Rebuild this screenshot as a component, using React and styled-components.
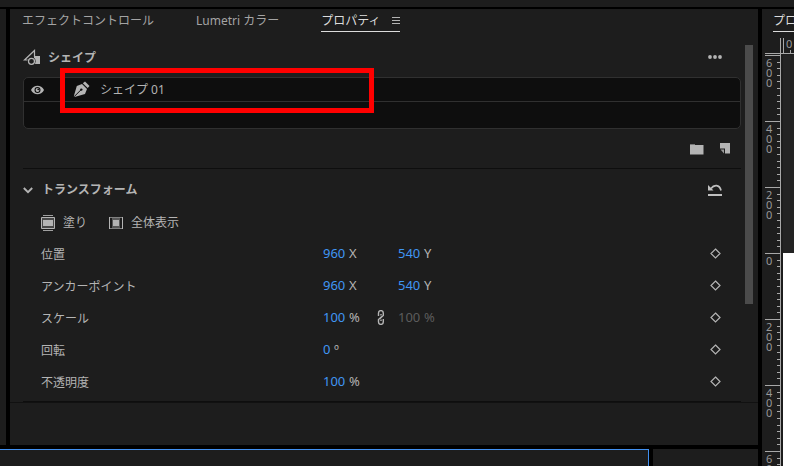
import React from "react"
import styled, { createGlobalStyle } from "styled-components"

const rows = [
  { id: "position", label: "位置", first: ["960", "X"], second: ["540", "Y"] },
  {
    id: "anchor",
    label: "アンカーポイント",
    first: ["960", "X"],
    second: ["540", "Y"],
  },
  {
    id: "scale",
    label: "スケール",
    first: ["100", "%"],
    second: ["100", "%"],
    linked: true,
  },
  { id: "rotation", label: "回転", first: ["0", "º"] },
  { id: "opacity", label: "不透明度", first: ["100", "%"] },
]

const rulerMarks = ["600", "400", "200", "0", "200", "400", "600"]
const minorTicks = [7, 13, 20, 26, 33, 40, 46, 53, 59]

function App() {
  return (
    <>
      <GlobalStyle />
      <Frame>
        <TopStrip />
        <Workspace>
          <LeftArea>
            <UpperRow>
              <SidePanel />
              <PropertiesPanel />
            </UpperRow>
            <LowerRow>
              <TimelinePanel />
              <MeterPanel />
            </LowerRow>
          </LeftArea>
          <ProgramPanel />
        </Workspace>
      </Frame>
    </>
  )
}

export default App

function PropertiesPanel() {
  return (
    <Panel>
      <Tabs>
        <Tab>エフェクトコントロール</Tab>
        <Tab>Lumetri カラー</Tab>
        <Tab $active>
          プロパティ
          <MenuIcon />
        </Tab>
      </Tabs>
      <Body>
        <Content>
          <Header>
            <ShapeIcon />
            <Title>シェイプ</Title>
            <IconButton aria-label="その他">
              <MoreIcon />
            </IconButton>
          </Header>
          <LayerList>
            <Layer>
              <VisibilityButton aria-label="表示">
                <EyeIcon />
              </VisibilityButton>
              <PenIcon />
              <span>シェイプ 01</span>
            </Layer>
            <Highlight />
          </LayerList>
          <Actions>
            <IconButton aria-label="グループ">
              <FolderIcon />
            </IconButton>
            <IconButton aria-label="新規レイヤー">
              <NewIcon />
            </IconButton>
          </Actions>
          <Section>
            <SectionHeader>
              <SectionToggle>
                <ChevronIcon />
                トランスフォーム
              </SectionToggle>
              <IconButton aria-label="リセット">
                <ResetIcon />
              </IconButton>
            </SectionHeader>
            <FitRow>
              <FitButton>
                <FillIcon />
                塗り
              </FitButton>
              <FitButton>
                <FitIcon />
                全体表示
              </FitButton>
            </FitRow>
            {rows.map(row => (
              <Row key={row.id}>
                <Label htmlFor={row.id}>{row.label}</Label>
                <Value id={row.id} data={row.first} />
                <Link>{row.linked && <LinkIcon />}</Link>
                {row.second ? (
                  <Value
                    id={row.id + "-2"}
                    name={row.label + " " + row.second[1]}
                    data={row.second}
                    disabled={row.linked}
                  />
                ) : (
                  <span />
                )}
                <IconButton aria-label="キーフレーム">
                  <KeyframeIcon />
                </IconButton>
              </Row>
            ))}
          </Section>
        </Content>
        <Scrollbar>
          <Thumb />
        </Scrollbar>
      </Body>
    </Panel>
  )
}

function Value({ id, name, data, disabled }) {
  return (
    <ValueBox $dim={disabled}>
      <ValueInput
        id={id}
        aria-label={name}
        defaultValue={data[0]}
        disabled={disabled}
        $short={data[0].length === 1}
      />
      <span>{data[1]}</span>
    </ValueBox>
  )
}

function ProgramPanel() {
  return (
    <Program>
      <ProgramTab>プログラム</ProgramTab>
      <TopRuler>
        <svg width="29" height="18" shapeRendering="crispEdges">
          <path
            d="M15.5 0v18M18.5 0v15M0 15.5h29M0 17.5h15M25.5 12v3"
            stroke="#a8a8a8"
          />
        </svg>
        <TopMark>0</TopMark>
      </TopRuler>
      <Stage>
        <SideRuler>
          {rulerMarks.map((mark, i) => (
            <RulerSegment key={i}>
              <RulerMark>
                {mark.split("").map((digit, j) => (
                  <span key={j}>{digit}</span>
                ))}
              </RulerMark>
              <svg width="16" height="66" shapeRendering="crispEdges">
                <path
                  d={
                    "M15.5 0v66" +
                    (i > 0 ? "M0 .5h15" : "") +
                    minorTicks.map(y => `M12 ${y}.5h3`).join("")
                  }
                  stroke="#a8a8a8"
                />
              </svg>
            </RulerSegment>
          ))}
        </SideRuler>
        <Canvas>
          <Pasteboard />
          <Picture />
        </Canvas>
      </Stage>
    </Program>
  )
}

const MenuIcon = () => (
  <svg width="8" height="8" shapeRendering="crispEdges">
    <path d="M0 .5h8M0 3.5h8M0 6.5h8" stroke="#b4b4b4" />
  </svg>
)

const ShapeIcon = () => (
  <svg width="17" height="16" viewBox="0 0 17 16">
    <path
      d="M5.5 11H1.500L11.500 1.500V8"
      fill="none"
      stroke="#b4b4b4"
      strokeWidth="1.200"
    />
    <path d="M11 7h6v8h-6z" fill="#b4b4b4" />
    <circle cx="8.500" cy="12.300" r="4.100" fill="#1d1d1d" />
    <circle cx="8.500" cy="12.300" r="3" fill="none" stroke="#b4b4b4" strokeWidth="1.300" />
  </svg>
)

const MoreIcon = () => (
  <svg width="14" height="4" viewBox="0 0 14 4" fill="#b4b4b4">
    <circle cx="2" cy="2" r="1.9" />
    <circle cx="7" cy="2" r="1.9" />
    <circle cx="12" cy="2" r="1.9" />
  </svg>
)

const EyeIcon = () => (
  <svg width="13" height="10" viewBox="0 0 13 10">
    <path
      d="M0 5C1.500 2 4 .8 6.500.8S11.500 2 13 5C11.500 8 9 9.200 6.500 9.200S1.500 8 0 5z"
      fill="#b4b4b4"
    />
    <circle cx="6.500" cy="5" r="3" fill="#0e0e0e" />
    <circle cx="6.500" cy="5" r="1.900" fill="#b4b4b4" />
    <circle cx="7.200" cy="4.300" r=".9" fill="#0e0e0e" />
  </svg>
)

const PenIcon = () => (
  <svg width="17" height="17" viewBox="0 0 17 17">
    <path d="M9.800 2.300L12 .5l4.500 4.500-1.800 2z" fill="#b4b4b4" />
    <path d="M9 3l5 5-2 5L1.500 16 .8 15.200 3.800 5z" fill="#b4b4b4" />
    <path d="M1 15.800L7.800 9" stroke="#0e0e0e" strokeWidth="1" />
    <circle cx="8.300" cy="8.600" r="1.200" fill="#0e0e0e" />
  </svg>
)

const FolderIcon = () => (
  <svg width="14" height="12" viewBox="0 0 14 12">
    <path d="M0 2V1h5v1z" fill="#777" />
    <path d="M0 2h13.500v9.500H0z" fill="#b4b4b4" />
  </svg>
)

const NewIcon = () => (
  <svg width="10" height="11" viewBox="0 0 10 11">
    <path d="M0 0h10v10.500H5V5.500H0z" fill="#b4b4b4" />
    <path d="M.5 6.500h3.500v4z" fill="#999" />
  </svg>
)

const ChevronIcon = () => (
  <svg width="10" height="7" viewBox="0 0 10 7">
    <path d="M.8 1L5 5.200 9.200 1" fill="none" stroke="#b4b4b4" strokeWidth="1.900" />
  </svg>
)

const ResetIcon = () => (
  <svg width="14" height="12" viewBox="0 0 14 12">
    <path d="M0 1v5.500h5.500z" fill="#c0c0c0" />
    <path
      d="M3 4.500C6 .5 11.500.2 13 6.500"
      fill="none"
      stroke="#c0c0c0"
      strokeWidth="1.700"
    />
    <path d="M0 10h14v2H0z" fill="#c0c0c0" />
  </svg>
)

const FillIcon = () => (
  <svg width="14" height="16" viewBox="0 0 14 16">
    <path d="M2 .5h10M2 15.500h10" stroke="#a0a0a0" />
    <path d="M.5 2.500h13v11H.5z" fill="#484848" stroke="#b4b4b4" />
    <path d="M2 5h10v6H2z" fill="#b4b4b4" />
  </svg>
)

const FitIcon = () => (
  <svg width="14" height="12" viewBox="0 0 14 12">
    <path d="M0 .5h14M0 11.500h14" stroke="#808080" />
    <path d="M.5 0v12M13.500 0v12" stroke="#b4b4b4" />
    <path d="M3 1h8v10H3z" fill="#585858" />
    <path d="M4 3h6v6H4z" fill="#b4b4b4" />
  </svg>
)

const LinkIcon = () => (
  <svg width="8" height="15" viewBox="0 0 8 15">
    <path
      d="M1.500 6V3a2.300 2.300 0 0 1 4.800 0V5.500L3 8.500M6.300 9v3a2.300 2.300 0 0 1-4.800 0V9.500L4.800 6.500M4 4v1.500M4 9.500v1.500"
      fill="none"
      stroke="#b4b4b4"
      strokeWidth="1.400"
    />
  </svg>
)

const KeyframeIcon = () => (
  <svg width="11" height="11" viewBox="0 0 11 11">
    <path
      d="M5.500 1l4.500 4.500-4.500 4.500L1 5.500z"
      fill="none"
      stroke="#b4b4b4"
      strokeWidth="1.200"
    />
  </svg>
)

const GlobalStyle = createGlobalStyle`
  * {
    box-sizing: border-box;
  }
  body {
    margin: 0;
    background: #000;
    color: #b4b4b4;
    font: 12px/16px "Noto Sans", "Noto Sans CJK JP", sans-serif;
  }
  button,
  input {
    padding: 0;
    border: 0;
    background: none;
    color: inherit;
    font: inherit;
  }
  svg {
    display: block;
    flex: none;
  }
`

const Frame = styled.div`
  display: flex;
  flex-direction: column;
  gap: 2px;
  height: 100vh;
  overflow: hidden;
`
const TopStrip = styled.div`
  flex: none;
  height: 7px;
  background: #1d1d1d;
`
const Workspace = styled.div`
  display: flex;
  flex: 1;
  gap: 4px;
  min-height: 0;
`
const LeftArea = styled.div`
  display: flex;
  flex-direction: column;
  flex: 1;
  gap: 4px;
  min-width: 0;
`
const UpperRow = styled.div`
  display: flex;
  flex: 1;
  gap: 4px;
`
const SidePanel = styled.div`
  width: 6px;
  background: #1d1d1d;
`
const Panel = styled.main`
  flex: 1;
  min-width: 0;
  background: #1d1d1d;
`
const LowerRow = styled.div`
  display: flex;
  gap: 4px;
  height: 17px;
`
const TimelinePanel = styled.div`
  flex: 1;
  border-top: 1px solid #4190f0;
  border-right: 1px solid #4190f0;
  background: #1d1d1d;
`
const MeterPanel = styled.div`
  width: 105px;
  background: #1d1d1d;
`

const Tabs = styled.nav`
  display: flex;
  gap: 42px;
  padding: 4px 12px 0;
`
const Tab = styled.button`
  display: flex;
  align-items: center;
  gap: 11px;
  height: 19px;
  padding-bottom: 2px;
  border-bottom: 1px solid ${props => (props.$active ? "#dcdcdc" : "transparent")};
  color: ${props => (props.$active ? "#dcdcdc" : "#a4a4a4")};
  white-space: nowrap;
`
const Body = styled.div`
  display: flex;
  gap: 4px;
  margin-top: 13px;
  padding-right: 5px;
  border-bottom: 1px solid #111;
`
const Content = styled.div`
  flex: 1;
  min-width: 0;
  padding-left: 13px;
`
const Scrollbar = styled.div`
  width: 8px;
`
const Thumb = styled.div`
  height: 259px;
  background: #4b4b4b;
`

const IconButton = styled.button`
  display: flex;
  align-items: center;
  justify-content: center;
  height: 16px;
`
const Header = styled.header`
  display: flex;
  align-items: center;
  gap: 8px;
  height: 24px;
  padding-right: 19px;
`
const Title = styled.h1`
  flex: 1;
  margin: 0;
  padding-top: 2px;
  font-size: 12px;
  font-weight: 700;
`
const LayerList = styled.div`
  position: relative;
  height: 52px;
  margin-top: 8px;
  border: 1px solid #303030;
  border-radius: 5px;
  background: #0e0e0e;
`
const Layer = styled.div`
  display: flex;
  align-items: center;
  height: 24px;
  padding-left: 7px;
  border-bottom: 1px solid #303030;

  span {
    margin-left: 10px;
  }
`
const VisibilityButton = styled(IconButton)`
  margin-right: 29px;
`
const Highlight = styled.div`
  position: absolute;
  top: -10px;
  left: 36px;
  width: 314px;
  height: 45px;
  border: 5px solid #f00;
  pointer-events: none;
`
const Actions = styled.div`
  display: flex;
  align-items: center;
  justify-content: flex-end;
  gap: 16px;
  height: 39px;
  padding-right: 11px;
`

const Section = styled.section`
  padding-bottom: 4px;
  border-top: 1px solid #0e0e0e;
  border-bottom: 1px solid #0e0e0e;
`
const SectionHeader = styled.div`
  display: flex;
  align-items: center;
  justify-content: space-between;
  height: 42px;
  padding-right: 19px;
`
const SectionToggle = styled.button`
  display: flex;
  align-items: center;
  gap: 9px;
  font-weight: 700;
`
const FitRow = styled.div`
  display: flex;
  gap: 22px;
  height: 26px;
  padding-left: 18px;
`
const FitButton = styled.button`
  display: flex;
  align-items: center;
  gap: 8px;
  height: 24px;
`
const Row = styled.div`
  display: grid;
  grid-template-columns: 282px 54px 21px 1fr 11px;
  align-items: center;
  height: 32px;
  padding: 0 20px 0 18px;
`
const Label = styled.label`
  padding-top: 4px;
`
const Link = styled.span`
  display: flex;
`
const ValueBox = styled.div`
  display: flex;
  gap: 3px;
  color: ${props => (props.$dim ? "#5c5c5c" : "#b4b4b4")};
  font-size: 13px;
`
const ValueInput = styled.input`
  width: ${props => (props.$short ? 8 : 23)}px;
  height: 16px;
  color: ${props => (props.disabled ? "#5c5c5c" : "#4096f3")};
`

const Program = styled.aside`
  display: flex;
  flex-direction: column;
  width: 32px;
  overflow: hidden;
  background: #1d1d1d;
`
const ProgramTab = styled(Tab)`
  flex: none;
  width: 60px;
  margin: 4px 0 0 11px;
  border-color: #dcdcdc;
  color: #dcdcdc;
`
const TopRuler = styled.div`
  position: relative;
  flex: none;
  height: 17px;
  margin: 6px 0 0 3px;
`
const TopMark = styled.span`
  position: absolute;
  top: -2px;
  left: 21px;
  color: #999;
  font-size: 11px;
`
const Stage = styled.div`
  display: flex;
  flex: 1;
  gap: 2px;
  min-height: 0;
  padding-left: 3px;
`
const SideRuler = styled.div`
  width: 16px;
`
const RulerSegment = styled.div`
  display: grid;
  height: 66px;

  > * {
    grid-area: 1 / 1;
  }
`
const RulerMark = styled.div`
  display: flex;
  flex-direction: column;
  padding: 3px 0 0 1px;
  color: #999;
  font-size: 11px;
  line-height: 10px;
`
const Canvas = styled.div`
  display: flex;
  flex-direction: column;
  flex: 1;
`
const Pasteboard = styled.div`
  height: 198px;
  background: #232323;
`
const Picture = styled.div`
  flex: 1;
  background: #fff;
`
